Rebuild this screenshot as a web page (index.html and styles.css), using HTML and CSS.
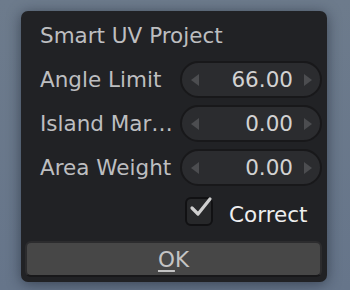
FILE: index.html
```html
<!DOCTYPE html>
<html>
<head>
<meta charset="utf-8">
<link rel="stylesheet" href="styles.css">
</head>
<body>
<div class="panel">
  <div class="title">Smart UV Project</div>
  <div class="rows">
    <div class="label">Angle Limit</div>
    <div class="spin"><span class="arr left"></span><span class="val">66.00</span><span class="arr right"></span></div>
    <div class="label">Island Mar…</div>
    <div class="spin"><span class="arr left"></span><span class="val">0.00</span><span class="arr right"></span></div>
    <div class="label">Area Weight</div>
    <div class="spin"><span class="arr left"></span><span class="val">0.00</span><span class="arr right"></span></div>
  </div>
  <div class="checkrow">
    <span class="box">
      <svg width="34" height="34" viewBox="0 0 34 34"><path d="M7 17 L13 23 L25 8" fill="none" stroke="#cfcfcf" stroke-width="3.2" stroke-linecap="round" stroke-linejoin="round"/></svg>
    </span>
    <span class="ctext">Correct</span>
  </div>
  <div class="ok"><span class="u">O</span>K</div>
</div>
</body>
</html>
```
FILE: styles.css
```css
html, body {
  margin: 0;
  padding: 0;
}
body {
  width: 350px;
  height: 290px;
  overflow: hidden;
  background: linear-gradient(180deg, #6d7b8c 0%, #66758a 100%);
  font-family: "DejaVu Sans", sans-serif;
  font-size: 21.5px;
  padding-top: 11px;
  box-sizing: border-box;
}
.panel {
  margin-left: 21px;
  width: 306px;
  height: 271px;
  box-sizing: border-box;
  background: #212225;
  border-radius: 7px;
  box-shadow: 0 2px 14px rgba(20, 28, 40, 0.55);
  padding: 0 5px 5px 4px;
  display: flex;
  flex-direction: column;
}
.title {
  height: 50px;
  line-height: 50px;
  padding-left: 15px;
  color: #bdbec0;
}
.rows {
  display: grid;
  grid-template-columns: 1fr 142px;
  grid-auto-rows: 37px;
  row-gap: 7px;
}
.label {
  padding-left: 15px;
  color: #bdbec0;
  line-height: 37px;
  white-space: nowrap;
}
.spin {
  box-sizing: border-box;
  border: 2px solid #18181a;
  background: #2b2c2f;
  border-radius: 19px;
  display: flex;
  align-items: center;
  padding: 0 8px 0 9px;
}
.val {
  flex: 1;
  text-align: right;
  color: #d2d2d2;
  padding-right: 11px;
}
.arr {
  width: 0;
  height: 0;
  border-top: 6px solid transparent;
  border-bottom: 6px solid transparent;
}
.arr.left {
  border-right: 8px solid #4c4d50;
}
.arr.right {
  border-left: 8px solid #4c4d50;
}
.checkrow {
  margin-top: 11px;
  height: 29px;
  display: flex;
  align-items: center;
  padding-left: 160px;
}
.box {
  position: relative;
  width: 28px;
  height: 29px;
  box-sizing: border-box;
  border: 2px solid #111113;
  background: #27282a;
  border-radius: 6px;
}
.box svg {
  position: absolute;
  left: -2px;
  top: -8px;
}
.ctext {
  margin-left: 16px;
  color: #eeeeee;
  padding-top: 6px;
}
.ok {
  margin-top: 15px;
  height: 36px;
  box-sizing: border-box;
  border: 2px solid #2c2c2e;
  border-bottom-color: #18181a;
  background: #474747;
  border-radius: 6px;
  color: #c4c4c4;
  text-align: center;
  line-height: 34px;
}
.u {
  text-decoration: underline;
  text-underline-offset: 3px;
}
```
